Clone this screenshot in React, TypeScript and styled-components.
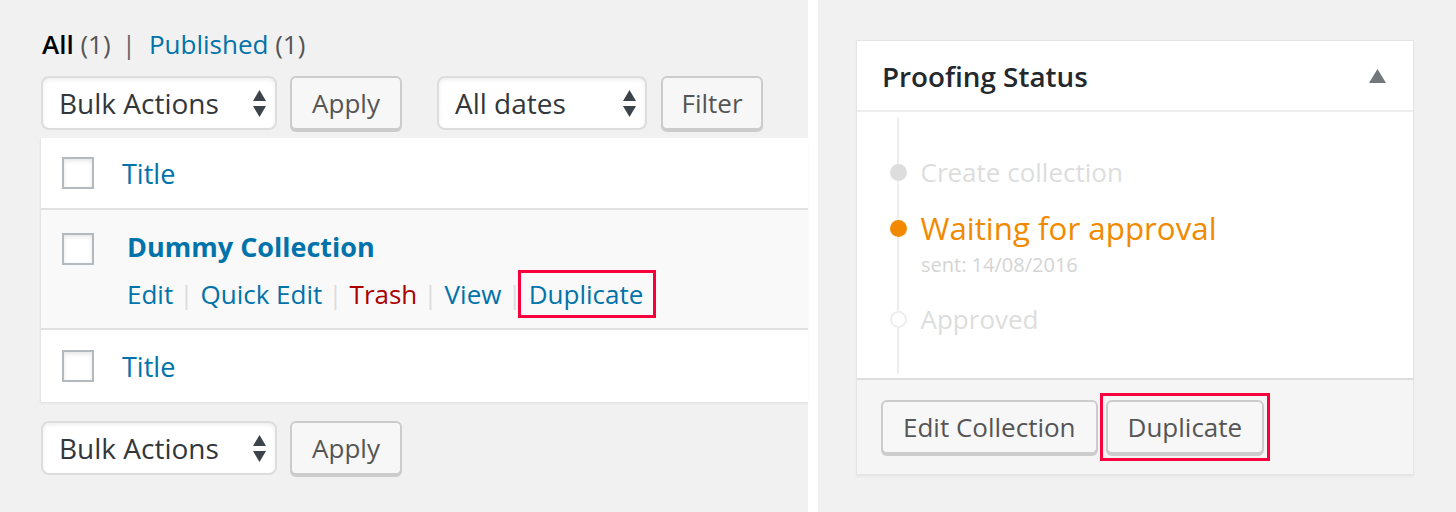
import styled, { createGlobalStyle } from 'styled-components'

/* --------------------- Style --------------------- */
const Global = createGlobalStyle`
  html, body {
    margin: 0;
    padding: 0;
    background: #fff;
    font-family: 'Open Sans', 'Liberation Sans', sans-serif;
  }
  * {
    box-sizing: border-box;
  }
`

const Page = styled.div`
  display: flex;
  gap: 10px;
  width: 1456px;
  height: 512px;
  overflow: hidden;
`

const ListPanel = styled.div`
  width: 808px;
  flex-shrink: 0;
  background: #f1f1f1;
  padding: 24px 0 0 40px;
`

const SubNav = styled.div`
  height: 40px;
  line-height: 40px;
  font-size: 26px;
  color: #555;
  margin-left: 2px;
  white-space: nowrap;
  > b {
    color: #000;
    font-weight: 600;
  }
  > a {
    color: #0073aa;
    text-decoration: none;
  }
  > .sep {
    color: #666;
    margin: 0 13px 0 11px;
  }
`

const TableNav = styled.div<{ $top?: boolean }>`
  display: flex;
  align-items: flex-start;
  height: ${(p) => (p.$top ? '62px' : 'auto')};
  margin-top: ${(p) => (p.$top ? '12px' : '19px')};
  margin-left: 1px;
`

const SelectBox = styled.div<{ $w: number; $gap?: number }>`
  display: flex;
  align-items: center;
  justify-content: space-between;
  width: ${(p) => p.$w}px;
  height: 54px;
  margin-right: ${(p) => p.$gap ?? 13}px;
  padding: 0 9px 0 16px;
  background: #fff;
  border: 2px solid #ddd;
  border-radius: 8px;
  box-shadow: inset 0 2px 4px rgba(0, 0, 0, 0.07);
  font-size: 28px;
  color: #32373c;
  > svg {
    flex-shrink: 0;
  }
`

const Button = styled.button<{ $w?: number; $gap?: number }>`
  height: 54px;
  ${(p) => (p.$w ? `width: ${p.$w}px;` : 'padding: 0 20px;')}
  margin-right: ${(p) => p.$gap ?? 0}px;
  background: #f7f7f7;
  border: 2px solid #ccc;
  border-radius: 6px;
  box-shadow: 0 2px 0 #ccc;
  font-family: 'Open Sans', 'Liberation Sans', sans-serif;
  font-size: 26px;
  color: #555;
  white-space: nowrap;
`

const Table = styled.div`
  background: #fff;
  border-left: 1px solid #e5e5e5;
  box-shadow: 0 2px 2px rgba(0, 0, 0, 0.05);
`

const Row = styled.div<{ $alt?: boolean; $h: number; $last?: boolean }>`
  display: flex;
  align-items: ${(p) => (p.$alt ? 'flex-start' : 'center')};
  height: ${(p) => p.$h}px;
  padding-left: 21px;
  background: ${(p) => (p.$alt ? '#f9f9f9' : '#fff')};
  border-bottom: ${(p) => (p.$last ? 'none' : '2px solid #e1e1e1')};
`

const Check = styled.span<{ $top?: number }>`
  display: block;
  width: 32px;
  height: 32px;
  flex-shrink: 0;
  margin-top: ${(p) => p.$top ?? 0}px;
  border: 2px solid #b4b9be;
  background: #fff;
  box-shadow: inset 0 2px 4px rgba(0, 0, 0, 0.1);
`

const ColTitle = styled.a`
  margin: 2px 0 0 28px;
  font-size: 27px;
  line-height: 40px;
  color: #0073aa;
  text-decoration: none;
`

const TitleCell = styled.div`
  display: flex;
  flex-direction: column;
  margin-left: 33px;
  padding-top: 17px;
`

const RowTitle = styled.a`
  font-size: 27px;
  font-weight: 700;
  line-height: 40px;
  color: #0073aa;
  text-decoration: none;
`

const RowActions = styled.div`
  display: flex;
  align-items: center;
  margin-top: 7px;
  font-size: 26px;
  line-height: 40px;
  white-space: nowrap;
`

const Action = styled.a<{ $danger?: boolean }>`
  color: ${(p) => (p.$danger ? '#a00' : '#0073aa')};
  text-decoration: none;
`

const Sep = styled.span`
  color: #ddd;
  margin: 0 7px 0 6px;
`

const Highlight = styled.span<{ $pad: string; $margin: string }>`
  display: inline-flex;
  border: 3px solid #f7003d;
  padding: ${(p) => p.$pad};
  margin: ${(p) => p.$margin};
`

const SidePanel = styled.div`
  flex: 1;
  background: #f1f1f1;
  padding: 40px 42px 0 38px;
`

const Postbox = styled.div`
  background: #fff;
  border: 1px solid #e5e5e5;
  box-shadow: 0 2px 2px rgba(0, 0, 0, 0.04);
`

const PostboxHeader = styled.div`
  display: flex;
  align-items: center;
  justify-content: space-between;
  height: 71px;
  padding: 0 27px 0 25px;
  border-bottom: 2px solid #eee;
  > h2 {
    margin: 0;
    font-size: 27.8px;
    font-weight: 600;
    color: #23282d;
  }
`

const Timeline = styled.div`
  margin: 5px 0 4px 40px;
  padding: 35px 0 35px;
  border-left: 2px solid #eee;
`

const Step = styled.div<{ $gap: number }>`
  display: flex;
  align-items: center;
  margin-top: ${(p) => p.$gap}px;
`

const Dot = styled.span<{ $state: 'done' | 'active' | 'todo' }>`
  width: 17px;
  height: 17px;
  flex-shrink: 0;
  margin-left: -9.5px;
  border-radius: 50%;
  background: ${(p) => (p.$state === 'done' ? '#ddd' : p.$state === 'active' ? '#f18a00' : '#fff')};
  border: ${(p) => (p.$state === 'todo' ? '2px solid #eee' : 'none')};
`

const StepLabel = styled.span<{ $active?: boolean }>`
  margin-left: 14px;
  font-size: ${(p) => (p.$active ? '31.3px' : '26px')};
  line-height: ${(p) => (p.$active ? '44px' : '40px')};
  color: ${(p) => (p.$active ? '#f18a00' : '#ddd')};
  white-space: nowrap;
`

const StepNote = styled.div`
  margin: 2px 0 0 22px;
  font-size: 20px;
  line-height: 25px;
  color: #d4d4d4;
`

const PostboxFooter = styled.div`
  display: flex;
  align-items: flex-start;
  height: 96px;
  padding: 20px 24px 0;
  background: #f5f5f5;
  border-top: 2px solid #ddd;
`
/* ------------------------------------------------- */

const Arrows = () => (
  <svg width="13" height="27" viewBox="0 0 13 27">
    <path d="M6.5 0 L13 11 L0 11 Z" fill="#3c434a" />
    <path d="M6.5 27 L13 16 L0 16 Z" fill="#3c434a" />
  </svg>
)

const Select = ({ label, w, gap }: { label: string; w: number; gap?: number }) => (
  <SelectBox $w={w} $gap={gap}>
    <span>{label}</span>
    <Arrows />
  </SelectBox>
)

const App = () => {
  return (
    <>
      <Global />
      <Page>
        <ListPanel>
          <SubNav>
            <b>All</b> (1)<span className="sep">|</span>
            <a href="#">Published</a> (1)
          </SubNav>
          <TableNav $top>
            <Select label="Bulk Actions" w={236} />
            <Button $w={112} $gap={35}>
              Apply
            </Button>
            <Select label="All dates" w={210} gap={14} />
            <Button $w={102}>Filter</Button>
          </TableNav>
          <Table>
            <Row $h={72}>
              <Check />
              <ColTitle href="#">Title</ColTitle>
            </Row>
            <Row $h={120} $alt>
              <Check $top={23} />
              <TitleCell>
                <RowTitle href="#">Dummy Collection</RowTitle>
                <RowActions>
                  <Action href="#">Edit</Action>
                  <Sep>|</Sep>
                  <Action href="#">Quick Edit</Action>
                  <Sep>|</Sep>
                  <Action href="#" $danger>
                    Trash
                  </Action>
                  <Sep>|</Sep>
                  <Action href="#">View</Action>
                  <Sep>|</Sep>
                  <Highlight $pad="1px 10px 1px 8px" $margin="-4px -13px -4px -11px">
                    <Action href="#">Duplicate</Action>
                  </Highlight>
                </RowActions>
              </TitleCell>
            </Row>
            <Row $h={72} $last>
              <Check />
              <ColTitle href="#">Title</ColTitle>
            </Row>
          </Table>
          <TableNav>
            <Select label="Bulk Actions" w={236} />
            <Button $w={112}>Apply</Button>
          </TableNav>
        </ListPanel>

        <SidePanel>
          <Postbox>
            <PostboxHeader>
              <h2>Proofing Status</h2>
              <svg width="17" height="14" viewBox="0 0 17 14">
                <path d="M8.5 0 L17 14 L0 14 Z" fill="#72777c" />
              </svg>
            </PostboxHeader>
            <Timeline>
              <Step $gap={0}>
                <Dot $state="done" />
                <StepLabel>Create collection</StepLabel>
              </Step>
              <Step $gap={14}>
                <Dot $state="active" />
                <StepLabel $active>Waiting for approval</StepLabel>
              </Step>
              <StepNote>sent: 14/08/2016</StepNote>
              <Step $gap={22}>
                <Dot $state="todo" />
                <StepLabel>Approved</StepLabel>
              </Step>
            </Timeline>
            <PostboxFooter>
              <Button $gap={2}>Edit Collection</Button>
              <Highlight $pad="4px 3px" $margin="-7px 0 0 0">
                <Button>Duplicate</Button>
              </Highlight>
            </PostboxFooter>
          </Postbox>
        </SidePanel>
      </Page>
    </>
  )
}
export default App
